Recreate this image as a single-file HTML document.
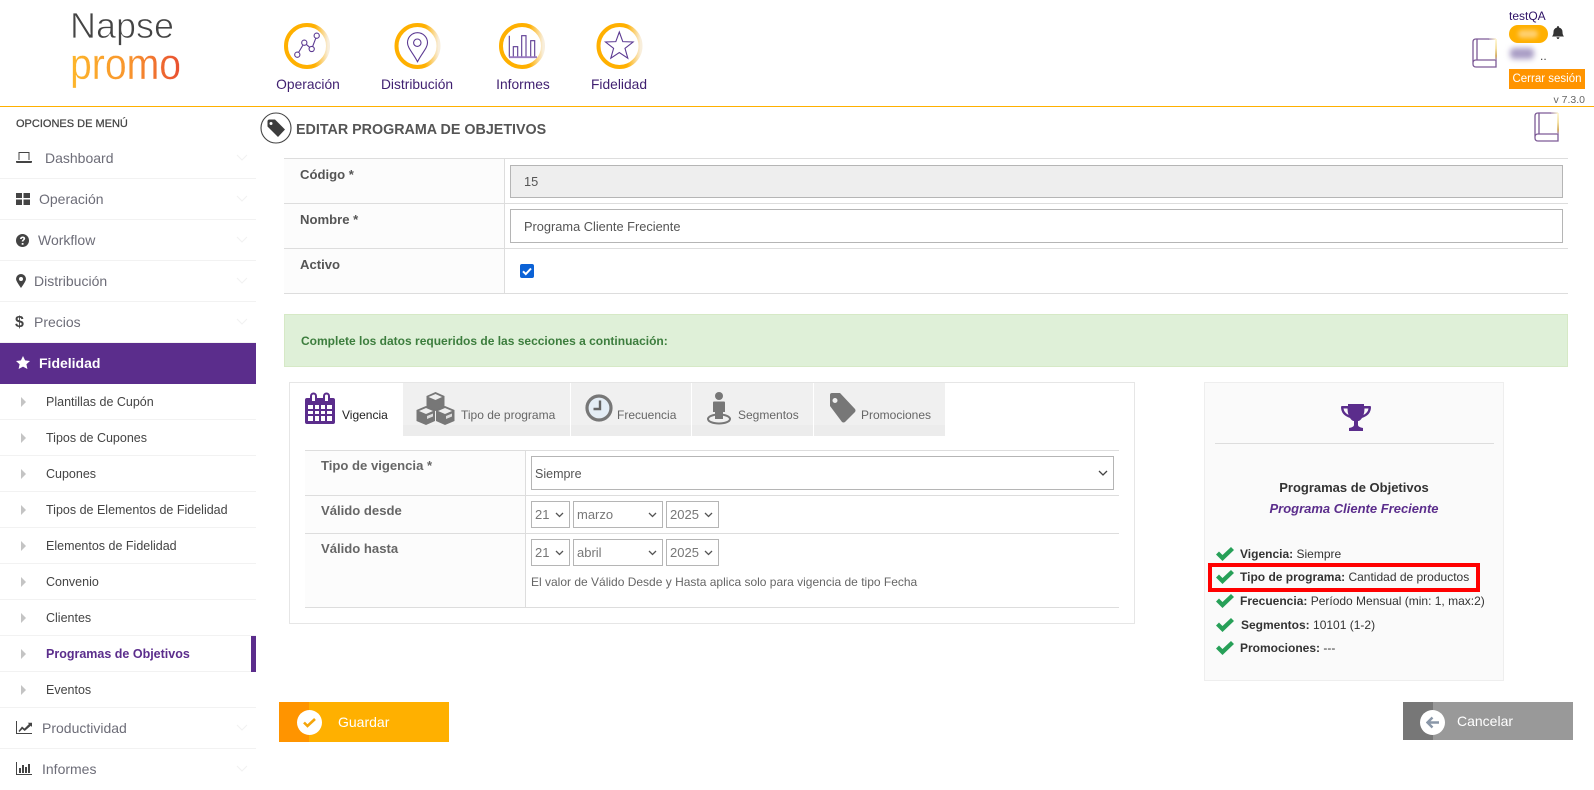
<!DOCTYPE html>
<html lang="es"><head><meta charset="utf-8"><title>Editar programa de objetivos</title>
<style>
*{box-sizing:border-box}
html,body{margin:0;padding:0;width:1594px;height:789px;overflow:hidden;background:#fff;font-family:"Liberation Sans",sans-serif;color:#555}
.a{position:absolute}
.t{position:absolute;white-space:nowrap;line-height:16px}
.nl{position:absolute;top:77px;font-size:13.8px;line-height:16px;color:#3f1f70;transform:translateX(-50%);white-space:nowrap}
.m{position:absolute;left:0;width:256px;height:41px;border-bottom:1px solid #f2f2f2}
.m span{position:absolute;top:12px;font-size:14px;line-height:16px;color:#6d6d78;white-space:nowrap}
.m svg.i{position:absolute;fill:#444}
.m svg.c{position:absolute;left:236px;top:16px}
.s{position:absolute;left:0;width:256px;height:36px;border-bottom:1px solid #f2f2f2}
.s span{position:absolute;left:46px;top:10px;font-size:12.5px;line-height:16px;color:#444;white-space:nowrap}
.s:before{content:"";position:absolute;left:21px;top:13px;border-left:5px solid #c4c4c4;border-top:5px solid transparent;border-bottom:5px solid transparent}
.h{position:absolute;height:1px;background:#ddd}
.v{position:absolute;width:1px;background:#ddd}
.l{position:absolute;font-weight:bold;font-size:13.1px;line-height:16px;color:#555;white-space:nowrap}
.b{position:absolute;border:1px solid #b5b5b5;background:#fff;font-size:13px;line-height:16px;color:#555}
.b b{font-weight:normal;position:absolute;left:3px;top:5px;white-space:nowrap}
.b svg{position:absolute;right:5px;top:10px}
.tb{position:absolute;top:383px;height:53px;background:linear-gradient(#f0f0f0 0,#f0f0f0 42px,#ececec 42px)}
.tt{position:absolute;top:407px;font-size:12px;line-height:16px;color:#666;white-space:nowrap}
.li{position:absolute;left:1240px;font-size:12px;line-height:14px;color:#333;white-space:nowrap}
.ck{position:absolute;left:1216px}
</style></head><body>

<!-- header -->
<div class="a" style="left:0;top:106px;width:1594px;height:1px;background:#ffb000"></div>
<svg class="a" style="left:60px;top:0" width="140" height="100">
<defs><linearGradient id="lg" x1="0" x2="1" y1="0" y2="0"><stop offset="0" stop-color="#fdb62a"/><stop offset=".55" stop-color="#f8932e"/><stop offset="1" stop-color="#e84e30"/></linearGradient></defs>
<text x="10" y="38" font-family="Liberation Sans" font-size="36" fill="#444" stroke="#fff" stroke-width=".8" textLength="104" lengthAdjust="spacingAndGlyphs">Napse</text>
<text x="10" y="79" font-family="Liberation Sans" font-size="44" fill="url(#lg)" stroke="#fff" stroke-width=".3" textLength="111" lengthAdjust="spacingAndGlyphs">promo</text>
</svg>

<svg class="a" style="left:280px;top:20px" width="370" height="54" fill="none">
<defs><linearGradient id="r" x1="0" x2="1" y1="0" y2="0"><stop offset="0" stop-color="#ffb000"/><stop offset=".68" stop-color="#ffb000"/><stop offset="1" stop-color="#f8eedc"/></linearGradient></defs>
<g stroke="url(#r)" stroke-width="4"><circle cx="27" cy="26" r="21"/><circle cx="137.500" cy="26" r="21"/><circle cx="242" cy="26" r="21"/><circle cx="339.500" cy="26" r="21"/></g>
<g stroke="#5c3a92" stroke-width="1.100">
<circle cx="17.300" cy="34.700" r="2.600"/><circle cx="24.300" cy="22.700" r="2.600"/><circle cx="31.700" cy="29" r="2.600"/><circle cx="36.700" cy="15.700" r="2.600"/><path d="M18.600 32.400l4.400-7.400M26.300 24.400l3.400 2.900M32.600 26.600l3.200-8.400"/>
<path d="M137.500 41.700C133 33 127.500 28 127.500 22.700a10 10 0 0 1 20 0C147.500 28 142 33 137.500 41.700z"/><circle cx="137.300" cy="22.700" r="3.700"/>
<path d="M229.300 15.700v21M233.300 36.700V26.700h4.400v10M241.700 36.700V15.700h4.300v21M250.700 36.700V20.700h4v16"/></g>
<path d="M229 37.200h28" stroke="#9a7bc0" stroke-width="1.800"/>
<path stroke="#5c3a92" stroke-width="1.100" d="M339.300 12l3.500 9.650 10.300.35-8.100 6.350 2.800 9.850-8.500-5.700-8.500 5.700 2.800-9.850-8.100-6.350 10.300-.35z"/>
</svg>
<div class="nl" style="left:308px">Operación</div>
<div class="nl" style="left:417px">Distribución</div>
<div class="nl" style="left:523px">Informes</div>
<div class="nl" style="left:619px">Fidelidad</div>

<svg width="0" height="0" style="position:absolute"><defs>
<linearGradient id="bk" x1="0" x2="0" y1="0" y2="1"><stop offset="0" stop-color="#fff6cc"/><stop offset=".45" stop-color="#f3d98a"/><stop offset=".8" stop-color="#c99a3c"/><stop offset="1" stop-color="#a98cc0"/></linearGradient>
<linearGradient id="bt" x1="0" x2="1" y1="0" y2="0"><stop offset="0" stop-color="#8a6aa6"/><stop offset="1" stop-color="#fff2c0"/></linearGradient>
</defs></svg>
<svg class="a" style="left:1472px;top:38px" width="26" height="30" fill="none"><path d="M17 1H4Q1 1 1 4v22q0 3 3 3h20V22H4Q1 22 1 25M5 1v21" stroke="#7d5a96" stroke-width="1.300"/><rect x="16" y=".4" width="8" height="1.300" fill="url(#bt)"/><rect x="23.300" y="1" width="1.500" height="21" fill="url(#bk)"/></svg>
<svg class="a" style="left:1534px;top:112px" width="26" height="30" fill="none"><path d="M17 1H4Q1 1 1 4v22q0 3 3 3h20V22H4Q1 22 1 25M5 1v21" stroke="#7d5a96" stroke-width="1.300"/><rect x="16" y=".4" width="8" height="1.300" fill="url(#bt)"/><rect x="23.300" y="1" width="1.500" height="21" fill="url(#bk)"/></svg>
<div class="t" style="left:1509px;top:8px;font-size:12px;color:#2e1266">testQA</div>
<div class="a" style="left:1509px;top:25px;width:39px;height:18px;border-radius:9px;background:#ffb000"></div>
<div class="a" style="left:1518px;top:30px;width:20px;height:8px;border-radius:4px;background:#ffd070;filter:blur(2px)"></div>
<svg class="a" style="left:1552px;top:26px" width="12" height="13" fill="#333"><path d="M6 0q1 0 1 1.500Q10.500 2.500 10.500 6q0 3 1.500 4.500H0Q1.500 9 1.500 6 1.500 2.500 5 1.500 5 0 6 0zM4.500 11.200h3Q7 13 6 13t-1.500-1.800z"/></svg>
<div class="a" style="left:1510px;top:48px;width:24px;height:11px;background:#a89cc4;border-radius:4px;filter:blur(3px)"></div>
<div class="t" style="left:1540px;top:48px;font-size:12px;color:#444">..</div>
<div class="a" style="left:1509px;top:69px;width:76px;height:20px;background:#ff9400;color:#fff;font-size:11.5px;line-height:21px;text-align:center;white-space:nowrap">Cerrar sesión</div>
<div class="t" style="right:9px;top:92px;font-size:10.500px;color:#666">v 7.3.0</div>

<!-- sidebar -->
<div class="t" style="left:16px;top:116px;font-size:11px;color:#444;-webkit-text-stroke:.25px #444">OPCIONES DE MENÚ</div>
<div class="m" style="top:138px;height:41px"><span style="left:45px;top:12px">Dashboard</span>
<svg class="i" style="left:16px;top:14px" width="16" height="12"><path d="M2.500 0h11v8h-1V1h-9v7h-1zM0 9h16v1q0 1-1 1H1q-1 0-1-1z"/></svg><svg class="c" width="12" height="7" fill="none" stroke="#f1f1f1"><path d="M1 1l5 5 5-5"/></svg></div>
<div class="m" style="top:179px"><span style="left:39px">Operación</span>
<svg class="i" style="left:16px;top:14px" width="14" height="12"><path d="M0 0h6v5H0zM7.500 0H14v5H7.500zM0 6.500h6V12H0zM7.500 6.500H14V12H7.500z"/></svg><svg class="c" width="12" height="7" fill="none" stroke="#f1f1f1"><path d="M1 1l5 5 5-5"/></svg></div>
<div class="m" style="top:220px"><span style="left:38px">Workflow</span>
<svg class="i" style="left:16px;top:14px" width="13" height="13"><path fill-rule="evenodd" d="M6.500 0a6.500 6.500 0 1 1 0 13 6.500 6.500 0 0 1 0-13zM4 5h1.700q.1-1 .9-1 .8 0 .8.700 0 .5-.7 1-1 .7-1 1.800h1.700q0-.6.700-1.100Q9.200 5.600 9.200 4.500 9 2.500 6.500 2.500 4.200 2.600 4 5zM5.700 9v1.800h1.800V9z"/></svg><svg class="c" width="12" height="7" fill="none" stroke="#f1f1f1"><path d="M1 1l5 5 5-5"/></svg></div>
<div class="m" style="top:261px"><span style="left:34px">Distribución</span>
<svg class="i" style="left:16px;top:13px" width="10" height="14"><path fill-rule="evenodd" d="M5 14Q0 7 0 5a5 5 0 0 1 10 0q0 2-5 9zM5 3a2 2 0 1 0 0 4 2 2 0 0 0 0-4z"/></svg><svg class="c" width="12" height="7" fill="none" stroke="#f1f1f1"><path d="M1 1l5 5 5-5"/></svg></div>
<div class="m" style="top:302px"><span style="left:34px">Precios</span>
<div class="a" style="left:15px;top:12px;font-size:16px;font-weight:bold;line-height:18px;color:#444">$</div><svg class="c" width="12" height="7" fill="none" stroke="#f1f1f1"><path d="M1 1l5 5 5-5"/></svg></div>
<div class="a" style="left:0;top:343px;width:256px;height:41px;background:#5b2d8c"></div>
<svg class="a" style="left:16px;top:356px" width="14" height="13" fill="#fff"><path d="M7 0l2.100 4.400 4.900.6-3.600 3.300 1 4.700L7 10.600 2.600 13l1-4.700L0 5l4.900-.6z"/></svg>
<div class="t" style="left:39px;top:355px;font-size:14px;font-weight:bold;color:#fff">Fidelidad</div>

<div class="s" style="top:384px"><span>Plantillas de Cupón</span></div>
<div class="s" style="top:420px"><span>Tipos de Cupones</span></div>
<div class="s" style="top:456px"><span>Cupones</span></div>
<div class="s" style="top:492px"><span>Tipos de Elementos de Fidelidad</span></div>
<div class="s" style="top:528px"><span>Elementos de Fidelidad</span></div>
<div class="s" style="top:564px"><span>Convenio</span></div>
<div class="s" style="top:600px"><span>Clientes</span></div>
<div class="s" style="top:636px"><span style="font-weight:bold;color:#5b2d8c">Programas de Objetivos</span></div>
<div class="a" style="left:251px;top:636px;width:5px;height:36px;background:#5b2d8c"></div>
<div class="s" style="top:672px"><span>Eventos</span></div>
<div class="m" style="top:708px"><span style="left:42px">Productividad</span>
<svg class="i" style="left:16px;top:13px" width="16" height="13"><path d="M0 0h1v12h15v1H0z"/><path d="M2.500 10L6 5.500l2.500 2L13 3l-1.300-1.200H16V6l-1.200-1.200L8.700 10 6.300 8 3.500 11z"/></svg><svg class="c" width="12" height="7" fill="none" stroke="#f1f1f1"><path d="M1 1l5 5 5-5"/></svg></div>
<div class="m" style="top:749px;border-bottom:0"><span style="left:42px">Informes</span>
<svg class="i" style="left:16px;top:13px" width="16" height="13"><path d="M0 0h1v12h15v1H0zM3 6h2v5H3zM6 3h2v8H6zM9 5h2v6H9zM12 2h2v9h-2z"/></svg><svg class="c" width="12" height="7" fill="none" stroke="#f1f1f1"><path d="M1 1l5 5 5-5"/></svg></div>

<!-- title -->
<svg class="a" style="left:260px;top:112px" width="32" height="32"><circle cx="16" cy="16" r="15" fill="#fff" stroke="#444" stroke-width="1.100"/><path d="M7.500 9.500q0-2 2-2h5.500l10 10-7 7.500-10.500-10.500zM11 10a1.500 1.500 0 1 0 0 3 1.500 1.500 0 0 0 0-3z" fill="#3d3d3d" fill-rule="evenodd"/></svg>
<div class="t" style="left:296px;top:122px;font-size:14.300px;font-weight:bold;color:#555">EDITAR PROGRAMA DE OBJETIVOS</div>

<!-- main form -->
<div class="a" style="left:284px;top:158px;width:1284px;height:135px;background:#fcfcfc"></div>
<div class="a" style="left:504px;top:158px;width:1064px;height:135px;background:#fff"></div>
<div class="h" style="left:284px;top:158px;width:1284px"></div>
<div class="h" style="left:284px;top:203px;width:1284px"></div>
<div class="h" style="left:284px;top:248px;width:1284px"></div>
<div class="h" style="left:284px;top:293px;width:1284px"></div>
<div class="v" style="left:504px;top:158px;height:135px"></div>
<div class="l" style="left:300px;top:167px">Código *</div>
<div class="l" style="left:300px;top:212px">Nombre *</div>
<div class="l" style="left:300px;top:257px">Activo</div>
<div class="b" style="left:510px;top:165px;width:1053px;height:33px;background:#eee;font-size:12.800px"><b style="left:13px;top:8px">15</b></div>
<div class="b" style="left:510px;top:209px;width:1053px;height:34px;font-size:12.800px"><b style="left:13px;top:9px">Programa Cliente Freciente</b></div>
<svg class="a" style="left:520px;top:264px" width="14" height="14"><rect width="14" height="14" rx="2" fill="#0b62d6"/><path d="M3 7.300l2.800 2.800L11 4.500" fill="none" stroke="#fff" stroke-width="2"/></svg>

<div class="a" style="left:284px;top:314px;width:1284px;height:53px;background:#dff0d8;border:1px solid #d6e9c6"></div>
<div class="t" style="left:301px;top:333px;font-size:12px;font-weight:bold;color:#3c7d3d">Complete los datos requeridos de las secciones a continuación:</div>

<!-- tabs box -->
<div class="a" style="left:289px;top:382px;width:846px;height:242px;border:1px solid #e6e6e6;background:#fff"></div>
<div class="tb" style="left:403px;width:167px"></div>
<div class="tb" style="left:571px;width:120px"></div>
<div class="tb" style="left:692px;width:121px"></div>
<div class="tb" style="left:814px;width:131px"></div>
<svg class="a" style="left:305px;top:392px" width="30" height="32"><path fill-rule="evenodd" fill="#5b2d8c" d="M2 6h3V4a3.500 3.500 0 0 1 7 0v2h6V4a3.500 3.500 0 0 1 7 0v2h3q2 0 2 2v22q0 2-2 2H2q-2 0-2-2V8q0-2 2-2zM7 4v5h3V4a1.500 1.500 0 0 0-3 0zM20 4v5h3V4a1.500 1.500 0 0 0-3 0zM3 13v4h5v-4zM10 13v4h4v-4zM16 13v4h4v-4zM22 13v4h5v-4zM3 19v3h5v-3zM10 19v3h4v-3zM16 19v3h4v-3zM22 19v3h5v-3zM3 24v5h5v-5zM10 24v5h4v-5zM16 24v5h4v-5zM22 24v5h5v-5z"/></svg>
<div class="tt" style="left:342px;color:#222">Vigencia</div>
<svg class="a" style="left:416px;top:392px" width="39" height="33"><g fill="#777"><path d="M19.500 0l9 4v11l-9 4-9-4V4z"/><path d="M10 14l9 4v11l-9 4-9.500-4V18z"/><path d="M29 14l9.500 4v11L29 33l-9-4V18z"/></g><path d="M12.500 5l7 3 6.500-3-6.500-3zM3 19l7 3 7-3-7-3zM22 19l7 3 7-3-7-3z" fill="#eee"/><path d="M30 27l6-2.500v-3l-6 2.500zM11 27l6-2.500v-3l-6 2.500z" fill="#ddd"/></svg>
<div class="tt" style="left:461px">Tipo de programa</div>
<svg class="a" style="left:585px;top:394px" width="28" height="28"><circle cx="14" cy="14" r="12" fill="#e4edf5" stroke="#777" stroke-width="3.200"/><path d="M15 6.500V15H8.500" fill="none" stroke="#666" stroke-width="2.400"/></svg>
<div class="tt" style="left:617px">Frecuencia</div>
<svg class="a" style="left:706px;top:392px" width="26" height="33"><circle cx="13" cy="4" r="4" fill="#777"/><path d="M8 9.500h10q1 0 1 1V20h-2v7H9v-7H7v-9.500q0-1 1-1z" fill="#777"/><ellipse cx="13" cy="27" rx="11" ry="4.500" fill="none" stroke="#777" stroke-width="2"/><path d="M9 20h8v7H9z" fill="#777"/></svg>
<div class="tt" style="left:738px">Segmentos</div>
<svg class="a" style="left:829px;top:392px" width="28" height="32"><path fill-rule="evenodd" fill="#777" d="M1 3q0-2 2-2h8l15 16q1 1.500 0 3L16 30q-1.500 1-3 0L1 14zM6 6a2.500 2.500 0 1 0 0 5 2.500 2.500 0 0 0 0-5z"/></svg>
<div class="tt" style="left:861px">Promociones</div>

<div class="a" style="left:305px;top:450px;width:220px;height:157px;background:#fcfcfc"></div>
<div class="h" style="left:305px;top:450px;width:814px"></div>
<div class="h" style="left:305px;top:495px;width:814px"></div>
<div class="h" style="left:305px;top:533px;width:814px"></div>
<div class="h" style="left:305px;top:607px;width:814px"></div>
<div class="v" style="left:525px;top:450px;height:157px"></div>
<div class="l" style="left:321px;top:458px;color:#666">Tipo de vigencia *</div>
<div class="l" style="left:321px;top:503px;color:#666">Válido desde</div>
<div class="l" style="left:321px;top:541px;color:#666">Válido hasta</div>

<div class="b" style="left:531px;top:456px;width:583px;height:34px;font-size:12.500px"><b style="top:9px">Siempre</b><svg style="top:13px" width="10" height="7" fill="none" stroke="#444" stroke-width="1.300"><path d="M1 1l4 4 4-4"/></svg></div>
<div class="b" style="left:531px;top:501px;width:39px;height:27px;color:#777"><b>21</b><svg width="9" height="6" fill="none" stroke="#555" stroke-width="1.300"><path d="M1 1l3.500 3.500L8 1"/></svg></div>
<div class="b" style="left:573px;top:501px;width:90px;height:27px;color:#777"><b>marzo</b><svg width="9" height="6" fill="none" stroke="#555" stroke-width="1.300"><path d="M1 1l3.500 3.500L8 1"/></svg></div>
<div class="b" style="left:666px;top:501px;width:53px;height:27px;color:#777"><b>2025</b><svg width="9" height="6" fill="none" stroke="#555" stroke-width="1.300"><path d="M1 1l3.500 3.500L8 1"/></svg></div>
<div class="b" style="left:531px;top:539px;width:39px;height:27px;color:#777"><b>21</b><svg width="9" height="6" fill="none" stroke="#555" stroke-width="1.300"><path d="M1 1l3.500 3.500L8 1"/></svg></div>
<div class="b" style="left:573px;top:539px;width:90px;height:27px;color:#777"><b>abril</b><svg width="9" height="6" fill="none" stroke="#555" stroke-width="1.300"><path d="M1 1l3.500 3.500L8 1"/></svg></div>
<div class="b" style="left:666px;top:539px;width:53px;height:27px;color:#777"><b>2025</b><svg width="9" height="6" fill="none" stroke="#555" stroke-width="1.300"><path d="M1 1l3.500 3.500L8 1"/></svg></div>
<div class="t" style="left:531px;top:574px;font-size:12px;color:#666">El valor de Válido Desde y Hasta aplica solo para vigencia de tipo Fecha</div>

<!-- summary -->
<div class="a" style="left:1204px;top:382px;width:300px;height:299px;background:#fafafa;border:1px solid #eee"></div>
<svg class="a" style="left:1341px;top:404px" width="30" height="27"><path fill="#5b2d8c" d="M7 0h16v2h6q1 0 1 1 0 8-9 11-2 3-4 3v4q0 2 5 3v3H8v-3q5-1 5-3v-4q-2 0-4-3Q0 11 0 3q0-1 1-1h6zM2.500 4.500q.5 4 5 6.500-1-3-1-6.500zM27.500 4.500h-4q0 3.500-1 6.500 4.500-2.500 5-6.500z"/></svg>
<div class="h" style="left:1215px;top:443px;width:279px;background:#ddd"></div>
<div class="t" style="left:1204px;width:300px;top:480px;text-align:center;font-size:13px;font-weight:bold;color:#333">Programas de Objetivos</div>
<div class="t" style="left:1204px;width:300px;top:501px;text-align:center;font-size:13px;font-weight:bold;font-style:italic;color:#5b2d8c">Programa Cliente Freciente</div>
<div class="a" style="left:1208px;top:563px;width:272px;height:29px;border:4px solid #f00"></div>
<svg width="0" height="0" style="position:absolute"><defs><path id="chk" d="M0 7.500L3 4.500 6.500 8 15 0l3 3L6.500 14z" fill="#27a058"/></defs></svg>
<svg class="ck" style="top:547px" width="18" height="14"><use href="#chk"/></svg>
<svg class="ck" style="top:570px" width="18" height="14"><use href="#chk"/></svg>
<svg class="ck" style="top:594px" width="18" height="14"><use href="#chk"/></svg>
<svg class="ck" style="top:618px" width="18" height="14"><use href="#chk"/></svg>
<svg class="ck" style="top:641px" width="18" height="14"><use href="#chk"/></svg>
<div class="li" style="top:547px"><b>Vigencia:</b> Siempre</div>
<div class="li" style="top:570px"><b>Tipo de programa:</b> Cantidad de productos</div>
<div class="li" style="top:594px"><b>Frecuencia:</b> Período Mensual (min: 1, max:2)</div>
<div class="li" style="top:618px;left:1241px"><b>Segmentos:</b> 10101 (1-2)</div>
<div class="li" style="top:641px"><b>Promociones:</b> ---</div>

<!-- buttons -->
<div class="a" style="left:279px;top:702px;width:170px;height:40px;background:#ffb000"></div>
<div class="a" style="left:279px;top:702px;width:30px;height:40px;background:#ff9400"></div>
<div class="a" style="left:297px;top:710px;width:25px;height:25px;border-radius:50%;background:#fff"></div>
<svg class="a" style="left:303px;top:717px" width="13" height="11" fill="none" stroke="#f5a50a" stroke-width="2.600"><path d="M1 5.500l3.500 3.500L12 2"/></svg>
<div class="t" style="left:338px;top:714px;font-size:14px;color:#fff">Guardar</div>
<div class="a" style="left:1403px;top:702px;width:170px;height:38px;background:#999"></div>
<div class="a" style="left:1403px;top:702px;width:30px;height:38px;background:#777"></div>
<div class="a" style="left:1420px;top:710px;width:25px;height:25px;border-radius:50%;background:#fff"></div>
<svg class="a" style="left:1426px;top:716px" width="13" height="13" fill="none" stroke="#8a97a8" stroke-width="2.400"><path d="M6.500 1.500l-5 5 5 5M2 6.500h11"/></svg>
<div class="t" style="left:1457px;top:713px;font-size:14px;color:#fff">Cancelar</div>
</body></html>
